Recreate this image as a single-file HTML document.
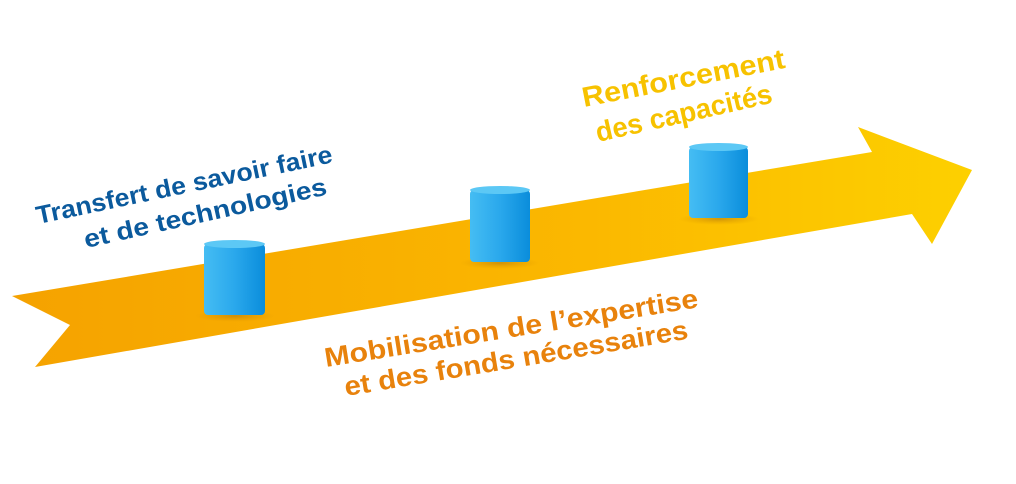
<!DOCTYPE html>
<html><head><meta charset="utf-8"><style>
html,body{margin:0;padding:0;background:#fff;width:1016px;height:484px;overflow:hidden}
svg{display:block}
text{font-family:"Liberation Sans",sans-serif;font-weight:bold}
</style></head><body>
<svg width="1016" height="484" viewBox="0 0 1016 484">
<defs>
<linearGradient id="ar" x1="0" y1="0" x2="1" y2="0">
<stop offset="0" stop-color="#f5a200"/><stop offset="0.6" stop-color="#fbb800"/><stop offset="1" stop-color="#fdd000"/>
</linearGradient>
<linearGradient id="cy" x1="0" y1="0" x2="1" y2="0">
<stop offset="0" stop-color="#45bdf3"/><stop offset="0.5" stop-color="#2aa8ec"/><stop offset="1" stop-color="#0a8ddb"/>
</linearGradient>
<radialGradient id="sh"><stop offset="0" stop-color="#b07a10" stop-opacity="0.6"/><stop offset="1" stop-color="#d99000" stop-opacity="0"/></radialGradient>
</defs>
<polygon points="12,296 872,152 858,127 972,170 932,244 912,214 35,367 70,325" fill="url(#ar)"/>
<g>
<ellipse cx="235" cy="316" rx="40" ry="6" fill="url(#sh)"/>
<rect x="204" y="244" width="61" height="71" rx="4" fill="url(#cy)"/>
<ellipse cx="234.5" cy="244" rx="30.5" ry="4" fill="#5cc8f5"/>
<ellipse cx="500" cy="263" rx="40" ry="6" fill="url(#sh)"/>
<rect x="470" y="190" width="60" height="72" rx="4" fill="url(#cy)"/>
<ellipse cx="500" cy="190" rx="30" ry="4" fill="#5cc8f5"/>
<ellipse cx="719" cy="219" rx="40" ry="6" fill="url(#sh)"/>
<rect x="689" y="147" width="59" height="71" rx="4" fill="url(#cy)"/>
<ellipse cx="718.5" cy="147" rx="29.5" ry="4" fill="#5cc8f5"/>
</g>
<g fill="#0b5a9d" font-size="25">
<text x="38" y="224" transform="rotate(-11.8 38 224)" textLength="302" lengthAdjust="spacingAndGlyphs">Transfert de savoir faire</text>
<text x="86" y="248" transform="rotate(-12.5 86 248)" textLength="248" lengthAdjust="spacingAndGlyphs">et de technologies</text>
</g>
<g fill="#e8820c" font-size="27">
<text x="326" y="367" transform="rotate(-9.1 326 367)" textLength="378" lengthAdjust="spacingAndGlyphs">Mobilisation de l’expertise</text>
<text x="346" y="396" transform="rotate(-9.5 346 396)" textLength="348" lengthAdjust="spacingAndGlyphs">et des fonds nécessaires</text>
</g>
<g fill="#f7c200" font-size="28">
<text x="584" y="107" transform="rotate(-11 584 107)" textLength="206" lengthAdjust="spacingAndGlyphs">Renforcement</text>
<text x="598" y="142" transform="rotate(-12.7 598 142)" textLength="180" lengthAdjust="spacingAndGlyphs">des capacités</text>
</g>
</svg>
</body></html>
